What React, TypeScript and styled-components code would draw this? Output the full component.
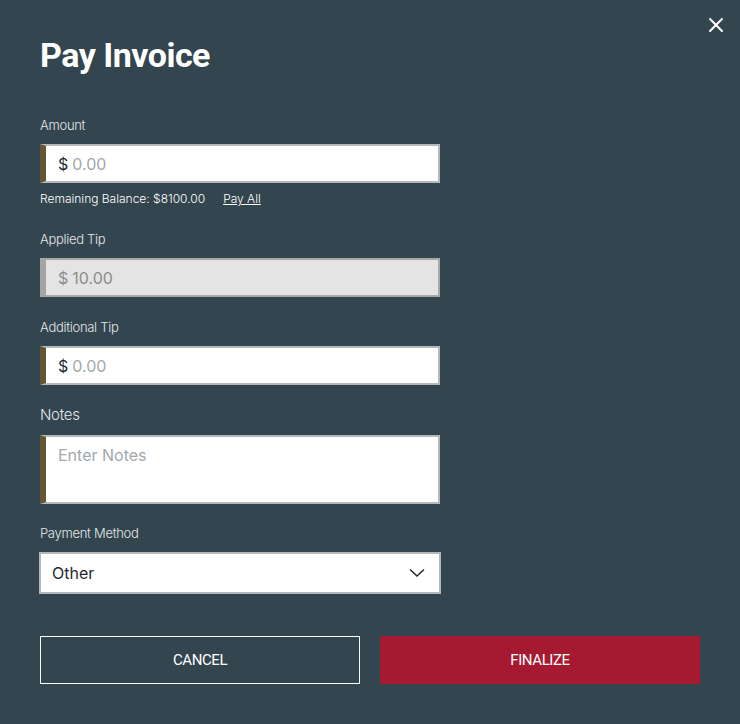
import React from "react"
import styled, { createGlobalStyle } from "styled-components"

const GlobalStyle = createGlobalStyle`
    html, body {
        margin: 0;
        padding: 0;
        background: #33454f;
    }
    * {
        box-sizing: border-box;
    }
`

const Page = styled.div`
    position: relative;
    width: 740px;
    height: 724px;
    background: #33454f;
    padding: 36px 40px 0 40px;
    font-family: Inter, "Noto Sans", sans-serif;
    color: #fff;
`

const CloseBtn = styled.button`
    position: absolute;
    top: 15px;
    right: 14px;
    width: 20px;
    height: 20px;
    padding: 0;
    border: none;
    background: transparent;
    cursor: pointer;
    display: flex;
    align-items: center;
    justify-content: center;
`

const Title = styled.h1`
    margin: 0 0 43px 0;
    font-family: Roboto, "Liberation Sans", sans-serif;
    font-weight: 700;
    font-size: 34px;
    line-height: 38px;
    letter-spacing: -0.5px;
    color: #fff;
`

const Form = styled.div`
    display: flex;
    flex-direction: column;
    width: 400px;
`

const Field = styled.div<{ $gap?: number }>`
    display: flex;
    flex-direction: column;
    margin-bottom: ${p => p.$gap ?? 22}px;
`

const Label = styled.label<{ $big?: boolean }>`
    font-size: ${p => (p.$big ? 15 : 13)}px;
    line-height: 16px;
    font-weight: 300;
    color: #e3e7e9;
    letter-spacing: -0.3px;
    margin-bottom: ${p => (p.$big ? 12 : 11)}px;
`

const InputBox = styled.div<{ $disabled?: boolean; $tall?: boolean }>`
    display: flex;
    align-items: ${p => (p.$tall ? "flex-start" : "center")};
    height: ${p => (p.$tall ? 69 : 39)}px;
    background: ${p => (p.$disabled ? "#e4e4e4" : "#fff")};
    border: 2px solid ${p => (p.$disabled ? "#a9a9a9" : "#b3b8bb")};
    border-left: 6px solid ${p => (p.$disabled ? "#a5a5a5" : "#625532")};
    padding: ${p => (p.$tall ? "8px 12px" : "0 12px")};
    font-size: 16px;
`

const Dollar = styled.span<{ $muted?: boolean }>`
    color: ${p => (p.$muted ? "#8b8b8b" : "#1e2a31")};
    margin-right: 4px;
`

const Placeholder = styled.span<{ $muted?: boolean }>`
    color: ${p => (p.$muted ? "#8b8b8b" : "#a2a8ac")};
`

const BalanceRow = styled.div`
    display: flex;
    gap: 18px;
    font-size: 12px;
    line-height: 14px;
    font-weight: 300;
    margin-top: 9px;
    color: #fff;
`

const PayAll = styled.a`
    color: #fff;
    text-decoration: underline;
    cursor: pointer;
`

const Select = styled.div`
    display: flex;
    align-items: center;
    justify-content: space-between;
    width: 402px;
    margin-left: -1px;
    height: 42px;
    background: #fff;
    border: 2px solid #b3b8bb;
    padding: 0 14px 0 11px;
    font-size: 16px;
    color: #1e2a31;
`

const ButtonRow = styled.div`
    display: flex;
    gap: 20px;
    margin-top: 42px;
`

const Button = styled.button<{ $primary?: boolean }>`
    width: 320px;
    height: 48px;
    border: ${p => (p.$primary ? "none" : "1px solid #fff")};
    background: ${p => (p.$primary ? "#a61a31" : "transparent")};
    color: #fff;
    font-family: Roboto, "Liberation Sans", sans-serif;
    font-weight: 400;
    font-size: 15px;
    letter-spacing: -0.4px;
    cursor: pointer;
`

const MoneyInput = ({ value, disabled }: { value: string; disabled?: boolean }) => (
    <InputBox $disabled={disabled}>
        <Dollar $muted={disabled}>$</Dollar>
        <Placeholder $muted={disabled}>{value}</Placeholder>
    </InputBox>
)

export default function App() {
    return (
        <Page>
            <GlobalStyle />
            <CloseBtn aria-label="close">
                <svg width="16" height="16" viewBox="0 0 16 16">
                    <path d="M2 2 L14 14 M14 2 L2 14" stroke="#fff" strokeWidth="2" strokeLinecap="round" />
                </svg>
            </CloseBtn>
            <Title>Pay Invoice</Title>
            <Form>
                <Field $gap={25}>
                    <Label>Amount</Label>
                    <MoneyInput value="0.00" />
                    <BalanceRow>
                        <span>Remaining Balance: $8100.00</span>
                        <PayAll>Pay All</PayAll>
                    </BalanceRow>
                </Field>
                <Field>
                    <Label>Applied Tip</Label>
                    <MoneyInput value="10.00" disabled />
                </Field>
                <Field>
                    <Label>Additional Tip</Label>
                    <MoneyInput value="0.00" />
                </Field>
                <Field $gap={21}>
                    <Label $big>Notes</Label>
                    <InputBox $tall>
                        <Placeholder>Enter Notes</Placeholder>
                    </InputBox>
                </Field>
                <Field $gap={0}>
                    <Label>Payment Method</Label>
                    <Select>
                        <span>Other</span>
                        <svg width="16" height="10" viewBox="0 0 16 10">
                            <path d="M1 1.5 L8 8 L15 1.5" stroke="#1e2a31" strokeWidth="1.5" fill="none" />
                        </svg>
                    </Select>
                </Field>
            </Form>
            <ButtonRow>
                <Button>CANCEL</Button>
                <Button $primary>FINALIZE</Button>
            </ButtonRow>
        </Page>
    )
}
